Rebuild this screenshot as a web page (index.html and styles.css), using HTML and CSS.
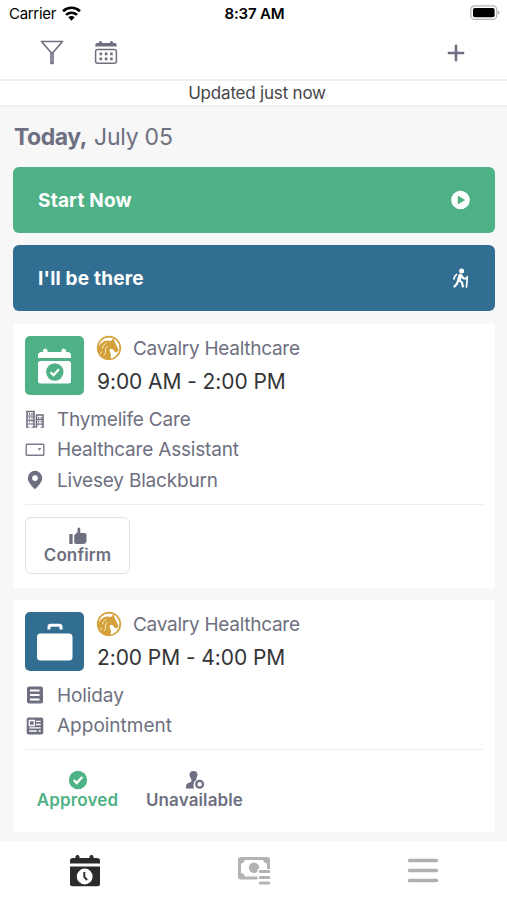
FILE: index.html
```html
<!DOCTYPE html>
<html lang="en">
<head>
<meta charset="utf-8">
<title>Shifts</title>
<link rel="stylesheet" href="styles.css">
</head>
<body>
<svg width="0" height="0" class="defs">
  <symbol id="horse" viewBox="0 0 26 26">
    <circle cx="13" cy="13" r="11.300" fill="none" stroke="currentColor" stroke-width="1.700"/>
    <path fill="currentColor" d="M1.500 15L3 11Q6 6 11 5.500L15 6l2.500-3 1 3.500 2 4 2 4.500-1.500 2.500-2-.5-2.500-3-2.500 0c-1.500 2 1.500 4 1 7.500l-1.500 3C7 25.500 2 20.500 1.500 15z"/>
    <path d="M10.500 8Q6.500 10 6.300 13.500M11.500 11Q8.500 13.500 9.500 17.500L8 20M5.500 16.500L4.500 19" stroke="#fbefcf" stroke-width=".9" fill="none"/>
  </symbol>
</svg>
<div class="status">
  <div class="carrier"><span class="t-carrier">Carrier</span>
    <svg width="19" height="15" viewBox="0 0 18 14" fill="none" stroke="#000" stroke-width="2.500"><path d="M1 4.800C5.500.5 12.500.5 17 4.800M3.800 8.300c3-2.700 7.400-2.700 10.400 0"/><path d="M6 10.600c1.700-1.600 4.300-1.600 6 0l-3 3.200z" fill="#000" stroke="none"/></svg>
  </div>
  <div class="clock"><span>8:37 AM</span></div>
  <div class="battery"><svg width="31" height="16" viewBox="0 0 31 16"><rect x="1.800" y=".8" width="26" height="13.600" rx="4" fill="#fff" stroke="#b5b5b5" stroke-width="1.300"/><rect x="4" y="3" width="21.600" height="9.200" rx="1.800"/><path d="M29 5.500q3 2 0 4z" fill="#aaa"/></svg></div>
</div>
<div class="toolbar">
  <svg width="24" height="25" viewBox="0 0 24 25" fill="none" stroke="#6e6f80" stroke-width="1.600"><path d="M1.500 1.500h21L13 12.500h-2zM11 12v11.500h2V12" stroke-linejoin="round"/></svg>
  <svg class="cal" width="24" height="25" viewBox="0 0 24 25"><path fill="#6e6f80" d="M1.300 6.500V5q0-2 2-2H5V2q1.500-2 3 0v1h8V2q1.500-2 3 0v1h1.700q2 0 2 2v1.500z"/><rect x="1.600" y="9.500" width="20.800" height="13.800" rx="2" fill="none" stroke="#6e6f80" stroke-width="1.500"/><path d="M5.500 13.900h13.200M5.500 18.900h13.200" stroke="#6e6f80" stroke-width="2.600" stroke-dasharray="2.600 2.700"/></svg>
  <svg class="plus" width="18" height="18" viewBox="0 0 18 18"><path d="M9 .8v16.400M.8 9h16.400" stroke="#6e6f80" stroke-width="2.600"/></svg>
</div>
<div class="updated"><span>Updated just now</span></div>
<main>
  <h1><b>Today,</b><span>July 05</span></h1>
  <div class="action green"><span>Start Now</span>
    <svg width="20" height="20" viewBox="0 0 20 20"><circle cx="9.500" cy="10" r="9.300" fill="#fff"/><path d="M6.800 5.600v8.800l7.400-4.400z" fill="#4fb286"/></svg>
  </div>
  <div class="action blue"><span>I'll be there</span>
    <svg width="20" height="20" viewBox="0 0 20 20" fill="none" stroke="#fff" stroke-linecap="round" stroke-linejoin="round"><circle cx="10.600" cy="3" r="2.500" fill="#fff" stroke="none"/><path d="M9.200 7.700L8 11.800" stroke-width="3.800"/><path d="M8 12l3 2.500.8 4M6.800 13.500l-1 2.500-2.300 2.500M10.500 7.500l2 3h3.300" stroke-width="2.200"/><path d="M5.500 6.500q-2 1-2.600 4.500M16.300 8.500l-.8 10.500" stroke-width="1.700"/></svg>
  </div>
  <section class="card first">
    <div class="head">
      <div class="tile green"><svg width="36" height="38" viewBox="0 0 36 38"><path fill="#fff" d="M1 11V8.500Q1 5 4.500 5H6V3q2-3 4.500 0v2h14V3q2-3 4.500 0v2h1.500Q34 5 34 8.500V11z"/><rect x="1" y="14" width="33" height="22.500" rx="2.500" fill="#fff"/><circle cx="17.800" cy="25" r="8.700" fill="#4fb286"/><path d="M13.500 25.300l3 2.800 5.500-5.800" fill="none" stroke="#fff" stroke-width="2.200"/></svg></div>
      <div class="info"><div class="org"><svg class="horse" width="26" height="26"><use href="#horse"/></svg><span>Cavalry Healthcare</span></div><div class="time"><span>9:00 AM - 2:00 PM</span></div></div>
    </div>
    <div class="rows">
      <div class="row"><svg width="20" height="20" viewBox="0 0 20 20" fill="none" stroke="#6e6f80"><path d="M2 18V2.500h7V18M11.500 18V6H18v12" stroke-width="1.600"/><path d="M4.500 4v11M7 4v11M13.700 8v8M16.200 8v8" stroke-width="1.200" stroke-dasharray="2 1.500"/><path d="M1 18.200h3.500M6.500 18.200h5.500M15.500 18.200H19M2 7h7M2 11h7M2 15h7M11 10.500h7M11 15h7" stroke-width="1.100"/></svg><span>Thymelife Care</span></div>
      <div class="row"><svg width="20" height="20" viewBox="0 0 20 20"><rect x="1.200" y="4.300" width="17.600" height="11" rx=".6" fill="none" stroke="#7b7c8b" stroke-width="1.400"/><path d="M12.500 8.200h4L14.500 10.500z" fill="#6e6f80"/></svg><span>Healthcare Assistant</span></div>
      <div class="row"><svg width="20" height="20" viewBox="0 0 20 20"><path fill="#6e6f80" fill-rule="evenodd" d="M10 .8a7.200 7.200 0 0 1 7.200 7.200c0 4.500-4.500 8.500-7.200 11.200C7.300 16.500 2.800 12.500 2.800 8A7.200 7.200 0 0 1 10 .8zm0 4.400a2.900 2.900 0 1 0 0 5.800 2.900 2.900 0 0 0 0-5.800z"/></svg><span>Livesey Blackburn</span></div>
    </div>
    <div class="foot"><div class="btn outlined"><svg width="20" height="18" viewBox="0 0 20 18" fill="#6e6f80"><rect x="1.300" y="7" width="3.300" height="10"/><path d="M6.200 8.200L9.500 5V2q0-1.500 1.300-1.500 1.500 0 1.500 2V6h4.200q2 0 2 2v5.500q0 3.500-3.500 3.500H9q-2.800 0-2.800-2z"/></svg><span>Confirm</span></div></div>
  </section>
  <section class="card second">
    <div class="head">
      <div class="tile blue"><svg width="38" height="40" viewBox="0 0 38 40"><path d="M13 7.500V5q0-1.800 1.800-1.800h8.400Q25 3.200 25 5v2.500" fill="none" stroke="#fff" stroke-width="3"/><rect x="1" y="11.500" width="35.500" height="27" rx="3.500" fill="#fff"/></svg></div>
      <div class="info"><div class="org"><svg class="horse" width="26" height="26"><use href="#horse"/></svg><span>Cavalry Healthcare</span></div><div class="time"><span>2:00 PM - 4:00 PM</span></div></div>
    </div>
    <div class="rows">
      <div class="row"><svg width="20" height="20" viewBox="0 0 20 20"><rect x="2" y="1.500" width="16" height="17" rx="2" fill="#6e6f80"/><path d="M5 5.500h9.500M5 10h9.500M5 14.500h9.500" stroke="#fff" stroke-width="1.800"/></svg><span class="hol">Holiday</span></div>
      <div class="row"><svg width="20" height="20" viewBox="0 0 20 20"><rect x="1.700" y="1.500" width="16.600" height="17" rx="2" fill="#6e6f80"/><path d="M4.300 4.500h5v5h-5zM11 5.300h4.700M11 8.500h4.700M4.300 11.800h11.400M4.300 15h7.500M13.500 15h2.200" stroke="#fff" stroke-width="1.300" fill="none"/></svg><span class="appt">Appointment</span></div>
    </div>
    <div class="foot">
      <div class="btn ok"><svg width="20" height="20" viewBox="0 0 20 20"><circle cx="10" cy="10" r="9.200" fill="#4fb286"/><path d="M5.700 10l3 3 5.600-6" fill="none" stroke="#fff" stroke-width="2.300"/></svg><span>Approved</span></div>
      <div class="btn un"><svg width="20" height="20" viewBox="0 0 20 20" fill="#6e6f80"><path d="M8.500 1a4 4 0 0 1 4 4c0 1.500-.7 2.500-1.300 3.500v1.700C8.700 11.200 8 14.500 9 18.500H1V16q0-2.500 2.800-3.200l2.200-.8q1-.5 0-3.500C5.200 7.300 4.500 6.500 4.500 5a4 4 0 0 1 4-4z"/><circle cx="14.600" cy="14.200" r="3.400" fill="none" stroke="#6e6f80" stroke-width="2.300"/></svg><span>Unavailable</span></div>
    </div>
  </section>
</main>
<nav>
  <div class="tab"><svg width="32" height="34" viewBox="0 0 32 34"><path fill="#2b2b2d" d="M1 9.500V6.800Q1 4 4 4h2.500V2.500Q8.500-1 10.500 2.500V4h10V2.500q2-3.500 4 0V4H28q3 0 3 2.800v2.700zM1 12.500h30v17.200q0 2.500-2.500 2.500h-25Q1 32.200 1 29.700z"/><circle cx="15.700" cy="22.500" r="7.900" fill="#fff"/><path d="M15.300 18V23l2.800 3" fill="none" stroke="#2b2b2d" stroke-width="1.900"/></svg></div>
  <div class="tab"><svg width="34" height="30" viewBox="0 0 34 30"><rect x="2.500" y="2.500" width="29" height="19.500" rx="1.500" fill="#fff" stroke="#b3b3b5" stroke-width="3"/><path d="M3 2.500h5q0 5-5 5zM31 2.500h-5q0 5 5 5zM3 22h5q0-5-5-5z" fill="#b3b3b5"/><circle cx="17" cy="11.800" r="5.200" fill="#b3b3b5"/><path d="M20.500 13H34v17H20.500z" fill="#fff"/><path d="M23.300 15.500h8.500M23.300 21.500h8.500M23.300 27h8.500" stroke="#b3b3b5" stroke-width="3" stroke-linecap="round"/></svg></div>
  <div class="tab"><svg width="32" height="26" viewBox="0 0 32 26"><path d="M2.500 2.500h27M2.500 12.500h27M2.500 22.500h27" stroke="#b0b0b2" stroke-width="3.600" stroke-linecap="round"/></svg></div>
</nav>
</body>
</html>
```

FILE: styles.css
```css
* { box-sizing: border-box; }
body { margin: 0; width: 507px; height: 900px; overflow: hidden; background: #f7f7f8; color: #6e6f80; font-family: Inter, "Liberation Sans", sans-serif; display: flex; flex-direction: column; }
svg { display: block; flex: none; }
span, b { white-space: nowrap; }
.defs { position: absolute; }
.status { height: 28px; flex: none; background: #fff; color: #000; display: grid; grid-template-columns: 1fr 1fr 1fr; align-items: center; padding: 0 7px 2px 9px; }
.carrier { display: flex; align-items: center; gap: 6px; font-size: 15px; letter-spacing: -0.3px; }
.clock { text-align: center; font-size: 15px; font-weight: 600; letter-spacing: -0.15px; }
.battery { display: flex; justify-content: flex-end; }
.toolbar { height: 51px; flex: none; background: #fff; display: flex; align-items: center; padding: 0 42px 2px 40px; }
.cal { margin-left: 30px; }
.plus { margin-left: auto; }
.updated { height: 28px; flex: none; background: #fff; border-top: 2px solid #efeff0; border-bottom: 2px solid #efeff0; color: #454548; display: flex; align-items: center; justify-content: center; font-size: 17px; padding-left: 7px; letter-spacing: -0.2px; }
main { flex: 1; padding: 0 12px 0 13px; }
h1 { margin: 0; height: 60px; display: flex; align-items: center; gap: 7px; padding-left: 1px; font-size: 23px; font-weight: 400; letter-spacing: -0.25px; }
h1 b { font-weight: 700; letter-spacing: -0.45px; }
.action { height: 66px; margin-bottom: 12px; border-radius: 6px; color: #fff; font-size: 19px; font-weight: 700; letter-spacing: 0.2px; display: flex; align-items: center; justify-content: space-between; padding: 0 24px 0 25px; }
.green { background: #4fb286; }
.blue { background: #326e91; }
.card { background: #fff; border-radius: 3px; padding: 12px 12px 0; }
.first { height: 264px; margin-bottom: 12px; margin-top: 13px; }
.second { height: 232px; }
.head { display: flex; height: 59px; gap: 12px; }
.tile { width: 59px; height: 59px; border-radius: 5px; display: flex; align-items: center; justify-content: center; }
.org { display: flex; align-items: center; gap: 11px; height: 24px; font-size: 19px; letter-spacing: -0.27px; }
.horse { color: #d4a13a; }
.time { height: 42px; display: flex; align-items: center; font-size: 21px; color: #343436; letter-spacing: -0.08px; padding-left: 1px; }
.rows { padding-top: 9px; }
.row { height: 30.5px; display: flex; align-items: center; gap: 12px; font-size: 19px; letter-spacing: -0.19px; }
.hol { letter-spacing: -0.1px; }
.appt { letter-spacing: 0; }
.foot { border-top: 1.5px solid #ededef; margin-top: 8px; padding-top: 12px; display: flex; }
.btn { height: 57px; border-radius: 6px; display: flex; flex-direction: column; align-items: center; justify-content: center; font-size: 17px; font-weight: 600; line-height: 20px; letter-spacing: 0.12px; }
.outlined { width: 105px; border: 1.5px solid #e0e0e3; padding-top: 2px; }
.ok { width: 105px; color: #4fb286; }
.ok, .un { padding-bottom: 1px; }
.un { width: 129px; }
nav { height: 59px; flex: none; background: #fff; display: grid; grid-template-columns: repeat(3, 1fr); }
.tab { display: flex; align-items: center; justify-content: center; }
```
